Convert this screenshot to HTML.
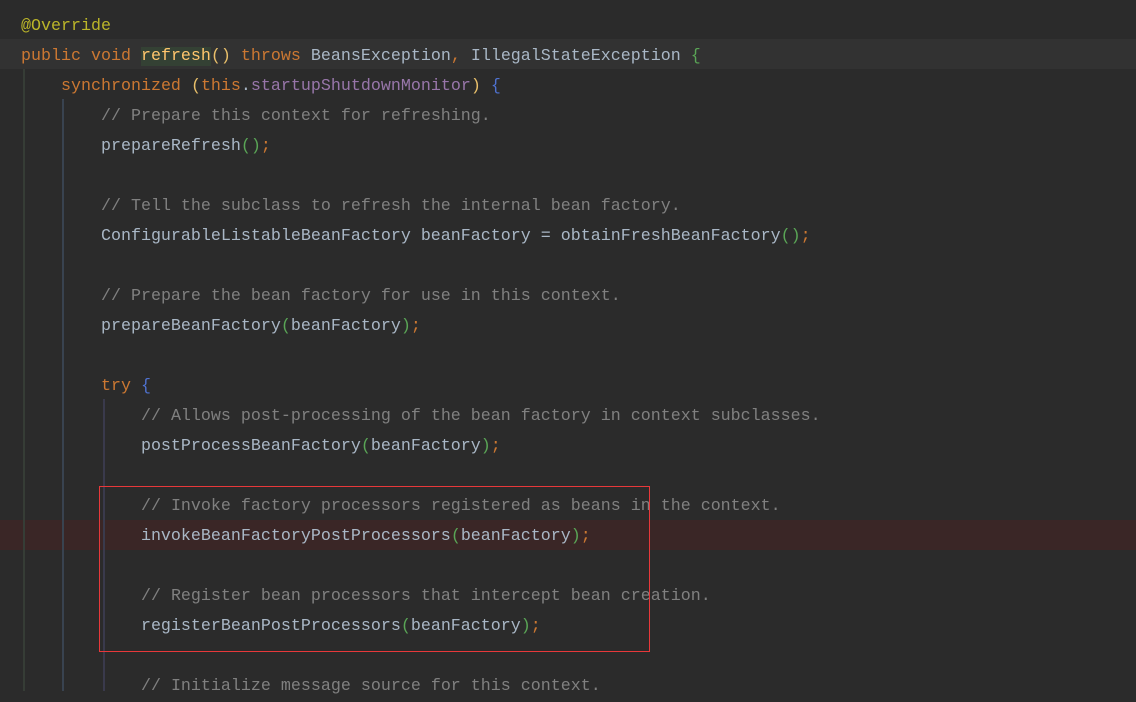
<!DOCTYPE html>
<html><head><meta charset="utf-8"><style>
html,body{margin:0;padding:0;}
body{width:1136px;height:691px;background:#2b2b2b;overflow:hidden;position:relative;font-family:"Liberation Mono",monospace;font-size:16.67px;color:#a9b7c6;}
.hl{position:absolute;left:0;width:1136px;height:30px;}
.g{position:absolute;width:2px;}
pre{position:absolute;left:21px;top:12px;margin:0;font:inherit;line-height:30px;white-space:pre;}
.k{color:#cc7832}.a{color:#bbb529}.m{color:#ffc66d}.f{color:#9876aa}.c{color:#808080}
.gr{color:#5aa556}.y{color:#e8bf6a}.b{color:#4f72d0}
.rf{background:#344134}
</style></head><body>
<div class="hl" style="top:39px;background:#323232"></div>
<div class="hl" style="top:520px;height:30px;background:#3a2626"></div>
<div class="g" style="left:23px;top:69px;height:622px;background:#363d36"></div>
<div class="g" style="left:62px;top:99px;height:592px;background:#394350"></div>
<div class="g" style="left:103px;top:399px;height:292px;background:#3a3a4c"></div>
<pre><span class="a">@Override</span>
<span class="k">public void </span><span class="m rf">refresh</span><span class="y">()</span> <span class="k">throws </span>BeansException<span class="k">, </span>IllegalStateException <span class="gr">{</span>
    <span class="k">synchronized </span><span class="y">(</span><span class="k">this</span>.<span class="f">startupShutdownMonitor</span><span class="y">)</span> <span class="b">{</span>
        <span class="c">// Prepare this context for refreshing.</span>
        prepareRefresh<span class="gr">()</span><span class="k">;</span>

        <span class="c">// Tell the subclass to refresh the internal bean factory.</span>
        ConfigurableListableBeanFactory beanFactory = obtainFreshBeanFactory<span class="gr">()</span><span class="k">;</span>

        <span class="c">// Prepare the bean factory for use in this context.</span>
        prepareBeanFactory<span class="gr">(</span>beanFactory<span class="gr">)</span><span class="k">;</span>

        <span class="k">try </span><span class="b">{</span>
            <span class="c">// Allows post-processing of the bean factory in context subclasses.</span>
            postProcessBeanFactory<span class="gr">(</span>beanFactory<span class="gr">)</span><span class="k">;</span>

            <span class="c">// Invoke factory processors registered as beans in the context.</span>
            invokeBeanFactoryPostProcessors<span class="gr">(</span>beanFactory<span class="gr">)</span><span class="k">;</span>

            <span class="c">// Register bean processors that intercept bean creation.</span>
            registerBeanPostProcessors<span class="gr">(</span>beanFactory<span class="gr">)</span><span class="k">;</span>

            <span class="c">// Initialize message source for this context.</span>
</pre>
<div style="position:absolute;left:99px;top:486px;width:549px;height:164px;border:1px solid #e8383a;"></div>
</body></html>
